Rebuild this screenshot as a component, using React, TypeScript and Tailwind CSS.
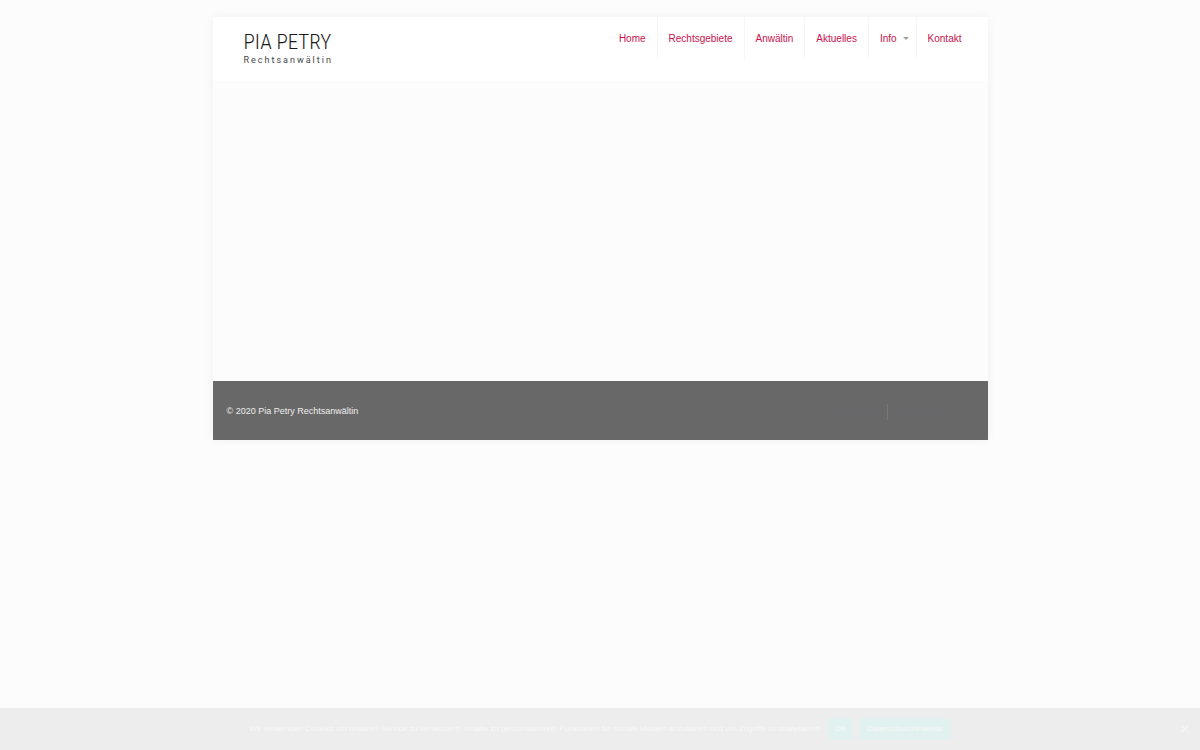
const navItems = [
  { label: 'Home', href: '#home' },
  { label: 'Rechtsgebiete', href: '#rechtsgebiete' },
  { label: 'Anwältin', href: '#anwaeltin' },
  { label: 'Aktuelles', href: '#aktuelles' },
  { label: 'Info', href: '#info', hasMenu: true },
  { label: 'Kontakt', href: '#kontakt' },
];

function Logo() {
  return (
    <a href="#home" className="flex flex-col text-[#1a1a1a]">
      <span className="font-['Roboto_Condensed',Roboto,sans-serif] text-[21px] font-light leading-5">PIA PETRY</span>
      <span className="font-['Roboto',sans-serif] text-[9px] leading-4 tracking-[2px] text-[#444]">Rechtsanwältin</span>
    </a>
  );
}

function Header() {
  return (
    <header className="flex items-start justify-between bg-white pr-[15px] pb-[13px] pl-[31px]">
      <div className="pt-[15px]">
        <Logo />
      </div>
      <nav>
        <ul className="flex">
          {navItems.map((item) => (
            <li key={item.label} className="border-r border-[#f6f6f6] last:border-r-0">
              <a
                href={item.href}
                className="flex h-[42px] items-center gap-[6px] px-[11px] text-[10px] text-[#c9114c]"
              >
                {item.label}
                {item.hasMenu && (
                  <svg viewBox="0 0 6 3" className="-mr-1 h-[3px] w-[6px]" aria-hidden="true">
                    <path d="M0 0h6L3 3z" fill="#a0a0a0" />
                  </svg>
                )}
              </a>
            </li>
          ))}
        </ul>
      </nav>
    </header>
  );
}

function Footer() {
  return (
    <footer className="flex h-[59px] items-center justify-between bg-[#686868] px-[14px] pt-[2px] text-[9px] text-[#eeeeee]">
      <p>© 2020 Pia Petry Rechtsanwältin</p>
      <ul className="mr-[27px] flex text-[#68686e]">
        <li className="border-r border-[#787878] px-2 leading-4">
          <a href="#impressum">Impressum</a>
        </li>
        <li className="pl-2 leading-4">
          <a href="#datenschutz">Datenschutz</a>
        </li>
      </ul>
    </footer>
  );
}

function CookieNotice() {
  return (
    <aside
      aria-label="Cookies"
      className="fixed inset-x-0 bottom-0 flex h-[42px] items-center justify-center bg-[#ededed] text-[8px] text-[#f8f8f8]"
    >
      <p className="mr-2">
        Wir verwenden Cookies um unseren Service zu verbessern, Inhalte zu personalisieren, Funktionen für soziale
        Medien anzubieten und um Zugriffe zu analysieren
      </p>
      <button type="button" className="mr-[6px] h-[22px] rounded-xs bg-[#e1f1ef] px-[7px]">
        OK
      </button>
      <a href="#datenschutz" className="flex h-[22px] items-center rounded-xs bg-[#e1f1ef] px-2">
        Datenschutzhinweise
      </a>
      <button type="button" aria-label="Schließen" className="absolute right-[11px]">
        <svg viewBox="0 0 8 8" className="size-2" aria-hidden="true">
          <path d="M1 1l6 6M7 1l-6 6" stroke="#f6f6f6" strokeWidth="1.2" />
        </svg>
      </button>
    </aside>
  );
}

export default function App() {
  return (
    <div className="min-h-screen bg-[#fcfcfc] pt-[17px] font-['Liberation_Sans',Arial,sans-serif]">
      <div className="mx-auto w-full max-w-[775px] shadow-[0_0_10px_rgba(0,0,0,0.05)]">
        <Header />
        <main className="h-[300px] bg-[#fcfcfc]" />
        <Footer />
      </div>
      <CookieNotice />
    </div>
  );
}
